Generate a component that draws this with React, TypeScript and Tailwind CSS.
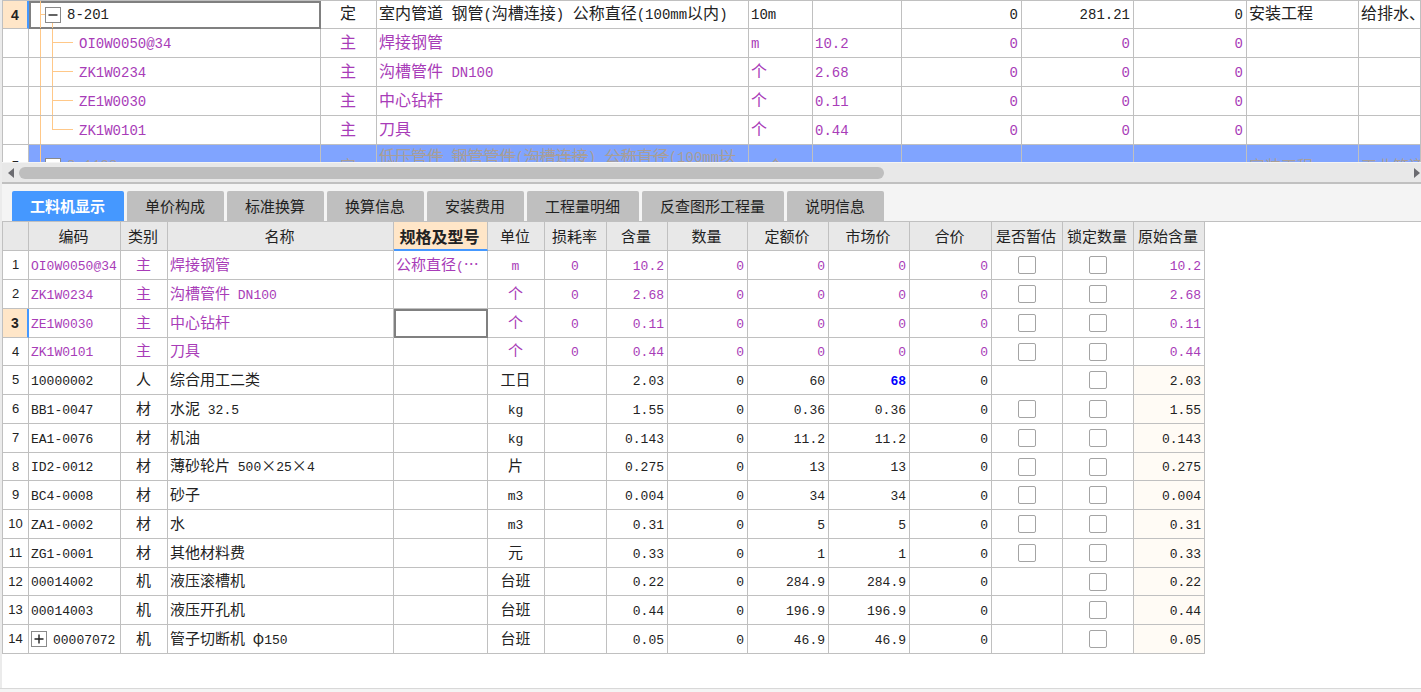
import { useState } from "react";

type Kind = "main" | "normal";

interface QuotaRow {
  no: string;
  code: string;
  type: string;
  name: string;
  unit: string;
  content: string;
  amounts: string[];
  specialty: string;
  chapter: string;
  kind: "parent" | "child" | "disabled";
}

interface MaterialRow {
  code: string;
  type: string;
  name: string;
  spec?: string;
  unit: string;
  loss?: string;
  content: string;
  price: string;
  market: string;
  estimate: boolean;
  kind: Kind;
}

const quotaColumns = [
  "w-[26px]", "w-[292px]", "w-[56px]", "w-[372px]", "w-[64px]", "w-[89px]",
  "w-[120px]", "w-[112px]", "w-[113px]", "w-[112px]", "",
];

const quotaRows: QuotaRow[] = [
  { no: "4", code: "8-201", type: "定", name: "室内管道 钢管(沟槽连接) 公称直径(100mm以内)", unit: "10m", content: "", amounts: ["0", "281.21", "0"], specialty: "安装工程", chapter: "给排水、", kind: "parent" },
  { no: "", code: "OI0W0050@34", type: "主", name: "焊接钢管", unit: "m", content: "10.2", amounts: ["0", "0", "0"], specialty: "", chapter: "", kind: "child" },
  { no: "", code: "ZK1W0234", type: "主", name: "沟槽管件 DN100", unit: "个", content: "2.68", amounts: ["0", "0", "0"], specialty: "", chapter: "", kind: "child" },
  { no: "", code: "ZE1W0030", type: "主", name: "中心钻杆", unit: "个", content: "0.11", amounts: ["0", "0", "0"], specialty: "", chapter: "", kind: "child" },
  { no: "", code: "ZK1W0101", type: "主", name: "刀具", unit: "个", content: "0.44", amounts: ["0", "0", "0"], specialty: "", chapter: "", kind: "child" },
  { no: "5", code: "8-1138", type: "定", name: "低压管件 钢管管件(沟槽连接) 公称直径(100mm以内)", unit: "10个", content: "", amounts: ["0", "0", "0"], specialty: "安装工程", chapter: "工业管道", kind: "disabled" },
];

const tabs = ["工料机显示", "单价构成", "标准换算", "换算信息", "安装费用", "工程量明细", "反查图形工程量", "说明信息"];

const materialColumns = [
  { title: "", width: "w-[26px]" },
  { title: "编码", width: "w-[92px]" },
  { title: "类别", width: "w-[47px]" },
  { title: "名称", width: "w-[226px]" },
  { title: "规格及型号", width: "w-[94px]" },
  { title: "单位", width: "w-[57px]" },
  { title: "损耗率", width: "w-[62px]" },
  { title: "含量", width: "w-[61px]" },
  { title: "数量", width: "w-[80px]" },
  { title: "定额价", width: "w-[81px]" },
  { title: "市场价", width: "w-[81px]" },
  { title: "合价", width: "w-[82px]" },
  { title: "是否暂估", width: "w-[71px]" },
  { title: "锁定数量", width: "w-[71px]" },
  { title: "原始含量", width: "w-[71px]" },
];

const materialRows: MaterialRow[] = [
  { code: "OI0W0050@34", type: "主", name: "焊接钢管", spec: "公称直径(…", unit: "m", loss: "0", content: "10.2", price: "0", market: "0", estimate: true, kind: "main" },
  { code: "ZK1W0234", type: "主", name: "沟槽管件 DN100", unit: "个", loss: "0", content: "2.68", price: "0", market: "0", estimate: true, kind: "main" },
  { code: "ZE1W0030", type: "主", name: "中心钻杆", unit: "个", loss: "0", content: "0.11", price: "0", market: "0", estimate: true, kind: "main" },
  { code: "ZK1W0101", type: "主", name: "刀具", unit: "个", loss: "0", content: "0.44", price: "0", market: "0", estimate: true, kind: "main" },
  { code: "10000002", type: "人", name: "综合用工二类", unit: "工日", content: "2.03", price: "60", market: "68", estimate: false, kind: "normal" },
  { code: "BB1-0047", type: "材", name: "水泥 32.5", unit: "kg", content: "1.55", price: "0.36", market: "0.36", estimate: true, kind: "normal" },
  { code: "EA1-0076", type: "材", name: "机油", unit: "kg", content: "0.143", price: "11.2", market: "11.2", estimate: true, kind: "normal" },
  { code: "ID2-0012", type: "材", name: "薄砂轮片 500×25×4", unit: "片", content: "0.275", price: "13", market: "13", estimate: true, kind: "normal" },
  { code: "BC4-0008", type: "材", name: "砂子", unit: "m3", content: "0.004", price: "34", market: "34", estimate: true, kind: "normal" },
  { code: "ZA1-0002", type: "材", name: "水", unit: "m3", content: "0.31", price: "5", market: "5", estimate: true, kind: "normal" },
  { code: "ZG1-0001", type: "材", name: "其他材料费", unit: "元", content: "0.33", price: "1", market: "1", estimate: true, kind: "normal" },
  { code: "00014002", type: "机", name: "液压滚槽机", unit: "台班", content: "0.22", price: "284.9", market: "284.9", estimate: false, kind: "normal" },
  { code: "00014003", type: "机", name: "液压开孔机", unit: "台班", content: "0.44", price: "196.9", market: "196.9", estimate: false, kind: "normal" },
  { code: "00007072", type: "机", name: "管子切断机 φ150", unit: "台班", content: "0.05", price: "46.9", market: "46.9", estimate: false, kind: "normal" },
];

// Latin runs are set in the monospaced face, a little smaller than the Chinese text
function Mixed({ text, small }: { text: string; small?: boolean }) {
  return (
    <>
      {text.split(/([\x20-\x7e]+)/).map((part, i) =>
        i % 2 === 1 ? (
          <span
            key={i}
            className={`leading-none whitespace-pre-wrap font-['Liberation_Mono',monospace] ${
              small ? "text-[13px]" : "text-[14px]"
            }`}
          >
            {part}
          </span>
        ) : (
          part
        )
      )}
    </>
  );
}

function ToggleBox({ open, label }: { open: boolean; label: string }) {
  return (
    <button
      type="button"
      aria-label={label}
      aria-expanded={open}
      className="relative size-4 shrink-0 border border-[#8a8a8a] bg-white"
    >
      <svg viewBox="0 0 14 14" className="block size-full" stroke="#222" strokeWidth="1.4">
        <path d={open ? "M2.5 7h9" : "M2.5 7h9M7 2.5v9"} />
      </svg>
    </button>
  );
}

function TreeLines({ kind, last }: { kind: QuotaRow["kind"]; last: boolean }) {
  return (
    <svg className="absolute inset-y-0 left-0 h-full w-12" stroke="#ffc888" strokeWidth="1" shapeRendering="crispEdges">
      <line x1="11.5" x2="11.5" y1="0" y2="100%" />
      {kind === "parent" && (
        <>
          <line x1="12" x2="16" y1="13.5" y2="13.5" />
          <line x1="23.5" x2="23.5" y1="20" y2="100%" />
        </>
      )}
      {kind === "child" && (
        <>
          <line x1="23.5" x2="23.5" y1="0" y2={last ? "14" : "100%"} />
          <line x1="24" x2="44" y1="13.5" y2="13.5" />
        </>
      )}
    </svg>
  );
}

function QuotaTable() {
  return (
    <div className="h-[162px] overflow-hidden bg-white">
      <table className="w-full table-fixed border-separate border-spacing-0 border-t border-l border-[#c0c0c0] text-base leading-5">
        <colgroup>
          {quotaColumns.map((width, i) => (
            <col key={i} className={width} />
          ))}
        </colgroup>
        <tbody className="[&_td]:overflow-hidden [&_td]:border-r [&_td]:border-b [&_td]:border-[#c0c0c0] [&_td]:pr-[3px] [&_td]:pl-[2px]">
          {quotaRows.map((row, i) => {
            const disabled = row.kind === "disabled";
            const tone = {
              parent: "h-7 text-[#222] whitespace-nowrap [&_td]:pb-[5px]",
              child: "h-[29px] text-[#a83cb8] whitespace-nowrap [&_td]:pb-[5px]",
              disabled: "h-[42px] text-[#a89e98] [&_td]:bg-[#80a4ff] [&_td]:pb-px",
            }[row.kind];
            return (
              <tr key={i} className={tone}>
                <td
                  className={`p-0! text-center font-['Liberation_Sans',sans-serif] text-sm text-[#222] ${
                    row.kind === "parent" ? "border-r-2! border-r-[#4598ff]! bg-[#ffe6c8] font-bold" : "bg-white!"
                  }`}
                >
                  {row.no}
                </td>
                <td
                  className={`relative p-0! ${
                    row.kind === "parent" ? "outline-2 -outline-offset-2 outline-[#808080]" : ""
                  }`}
                >
                  <TreeLines kind={row.kind} last={i === 4} />
                  {row.kind === "child" ? (
                    <div className="pb-[5px] pl-[50px]">
                      <Mixed text={row.code} />
                    </div>
                  ) : (
                    <div className="flex items-center gap-[6px] pl-4">
                      <ToggleBox open label={row.code} />
                      <span className="pb-[5px]">
                        <Mixed text={row.code} />
                      </span>
                    </div>
                  )}
                </td>
                <td className="text-center">{row.type}</td>
                <td className={disabled ? "line-through" : ""}>
                  <Mixed text={row.name} />
                </td>
                <td>
                  <Mixed text={row.unit} />
                </td>
                <td>
                  <Mixed text={row.content} />
                </td>
                {row.amounts.map((amount, j) => (
                  <td key={j} className="text-right">
                    <Mixed text={amount} />
                  </td>
                ))}
                <td>{row.specialty}</td>
                <td className="whitespace-nowrap">{row.chapter}</td>
              </tr>
            );
          })}
        </tbody>
      </table>
    </div>
  );
}

function ScrollBar() {
  return (
    <div className="mt-px flex h-5 items-center border-b border-[#c0c0c0] bg-[#e8e8e8]">
      <button type="button" aria-label="向左滚动" className="flex w-[17px] justify-center">
        <svg width="6" height="10" viewBox="0 0 6 10" fill="#6b6b70">
          <path d="M6 0v10L0 5z" />
        </svg>
      </button>
      <div className="flex-1">
        <div className="h-3 w-[62%] rounded-full bg-[#bebebe]" />
      </div>
      <button type="button" aria-label="向右滚动" className="flex w-[7px] justify-start">
        <svg width="6" height="10" viewBox="0 0 6 10" fill="#6b6b70">
          <path d="M0 0v10l6-5z" />
        </svg>
      </button>
    </div>
  );
}

function MaterialTable() {
  const check = "block mx-auto size-[18px] appearance-none rounded-xs border border-[#a4a4a4] bg-white checked:bg-[#4598ff]";

  return (
    <div className="overflow-x-auto">
      <table className="w-[1203px] table-fixed border-separate border-spacing-0 border-l border-[#c0c0c0] text-[15px] leading-5 whitespace-nowrap">
        <thead>
          <tr className="h-[29px]">
            {materialColumns.map((col) => (
              <th
                key={col.title}
                className={`${col.width} border-r border-b p-0 pr-[2px] text-[#222] ${
                  col.title === "规格及型号"
                    ? "border-r-[#c0c0c0] border-b-2 border-b-[#4598ff] bg-[#ffe6c8] text-base font-bold"
                    : "border-[#c0c0c0] bg-[#e8e8e8] font-normal"
                }`}
              >
                {col.title}
              </th>
            ))}
          </tr>
        </thead>
        <tbody className="[&_td]:border-r [&_td]:border-b [&_td]:border-[#c0c0c0] [&_td]:pt-0 [&_td]:pr-[3px] [&_td]:pb-[3px] [&_td]:pl-[2px]">
          {materialRows.map((row, i) => {
            const current = i === 2;
            return (
              <tr
                key={row.code}
                className={`h-[29px] nth-[4n]:h-7 ${row.kind === "main" ? "text-[#a83cb8]" : "text-[#222]"}`}
              >
                <td
                  className={`p-0! text-center font-['Liberation_Sans',sans-serif] text-[#222] ${
                    current ? "border-r-2! border-r-[#4598ff]! bg-[#ffe6c8] text-sm font-bold" : "text-[13px]"
                  }`}
                >
                  {i + 1}
                </td>
                <td className="pb-0!">
                  <div className="flex items-center gap-[6px]">
                    {i === 13 && <ToggleBox open={false} label={row.code} />}
                    <span className="pb-[3px]">
                      <Mixed text={row.code} small />
                    </span>
                  </div>
                </td>
                <td className="text-center">{row.type}</td>
                <td>
                  <Mixed text={row.name} small />
                </td>
                <td className={current ? "outline-2 -outline-offset-2 outline-[#808080]" : ""}>
                  <Mixed text={row.spec ?? ""} small />
                </td>
                <td className="text-center">
                  <Mixed text={row.unit} small />
                </td>
                <td className="text-center">
                  <Mixed text={row.loss ?? ""} small />
                </td>
                <td className="text-right">
                  <Mixed text={row.content} small />
                </td>
                <td className="text-right">
                  <Mixed text="0" small />
                </td>
                <td className="text-right">
                  <Mixed text={row.price} small />
                </td>
                <td className={`text-right ${row.market !== row.price ? "font-bold text-[#0000ff]" : ""}`}>
                  <Mixed text={row.market} small />
                </td>
                <td className="text-right">
                  <Mixed text="0" small />
                </td>
                <td className="p-0!">
                  {row.estimate && <input type="checkbox" aria-label={`${row.code} 是否暂估`} className={check} />}
                </td>
                <td className="p-0!">
                  <input type="checkbox" aria-label={`${row.code} 锁定数量`} className={check} />
                </td>
                <td className={`text-right ${row.kind === "normal" ? "bg-[#fffbf5]" : ""}`}>
                  <Mixed text={row.content} small />
                </td>
              </tr>
            );
          })}
        </tbody>
      </table>
    </div>
  );
}

export default function App() {
  const [activeTab, setActiveTab] = useState(tabs[0]);

  return (
    <div className="flex h-screen flex-col overflow-hidden bg-[#f4f4f4] font-['Noto_Sans_CJK_SC',sans-serif]">
      <div className="flex min-h-0 flex-1 flex-col border-l-2 border-[#ebebeb]">
        <QuotaTable />
        <ScrollBar />

        {/* Detail tabs */}
        <div className="flex items-end gap-[3px] border-y border-[#c0c0c0] bg-[#f4f4f4] pt-[7px] pl-[10px]">
          {tabs.map((tab) => (
            <button
              key={tab}
              type="button"
              onClick={() => setActiveTab(tab)}
              className={`h-[30px] rounded-t-xs pr-[19px] pl-[18px] text-[15px] leading-5 ${
                tab === activeTab ? "bg-[#4598ff] font-bold text-white" : "bg-[#bfbfbf] text-[#222]"
              }`}
            >
              {tab}
            </button>
          ))}
        </div>

        {/* Resource list */}
        <div className="min-h-0 flex-1 bg-white">
          <MaterialTable />
        </div>
      </div>
      <div className="h-1 border-t border-[#d8d8d8]" />
    </div>
  );
}
